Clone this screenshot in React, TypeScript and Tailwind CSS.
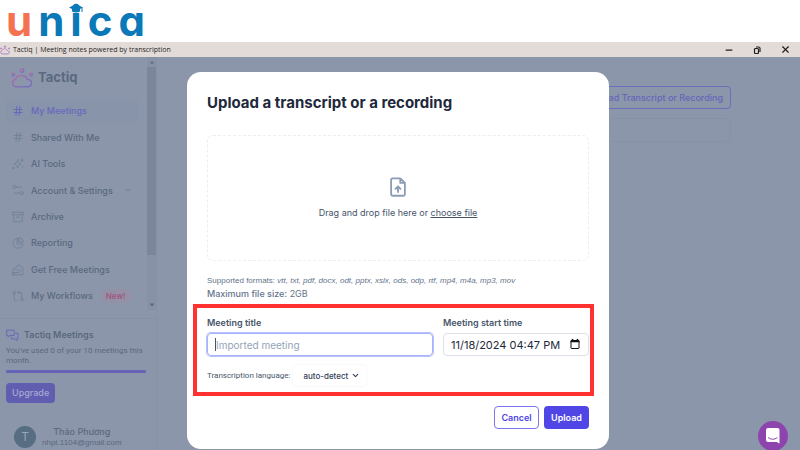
import type { ReactNode } from 'react';
import { ChevronDown, Hash, Minus, X } from 'lucide-react';

function Icon({ children, className = 'size-3' }: { children: ReactNode; className?: string }) {
  return (
    <svg
      viewBox="0 0 24 24"
      fill="none"
      stroke="currentColor"
      strokeWidth={1.7}
      strokeLinecap="round"
      strokeLinejoin="round"
      className={`shrink-0 ${className}`}
      aria-hidden="true"
    >
      {children}
    </svg>
  );
}

const sparkles = (
  <Icon>
    <path d="M11 4c1 5 2.500 7 7 8-4.500 1-6 3-7 8-1-5-2.500-7-7-8 4.500-1 6-3 7-8z" />
    <path d="M20 2v5M17.500 4.500h5M3 18v4M1 20h4M21 17v2" />
  </Icon>
);

const sliders = (
  <Icon>
    <circle cx="5" cy="6" r="3.200" />
    <circle cx="19" cy="18" r="3.200" />
    <path d="M9 6h11M4 18h11" />
  </Icon>
);

const archive = (
  <Icon>
    <path d="M1.500 2.500h21v5h-21zM3.500 7.500v14h17v-14M9 12.500h6" />
  </Icon>
);

const pie = (
  <Icon>
    <path d="M14.500 1.500a9 9 0 0 1 8 8.500h-8z" />
    <path d="M10.500 2.500a10 10 0 1 0 11.500 11.500H10.500z" />
  </Icon>
);

const house = (
  <Icon>
    <path d="M2 11 13 2.500c5 0 9 3.500 9 8.500v10.500H2z" />
    <path d="M2 17h12l4-5M7 12h7M2 21.500l4-4.500" />
  </Icon>
);

const workflow = (
  <Icon>
    <circle cx="4.500" cy="5" r="2.800" />
    <circle cx="19.500" cy="19" r="2.800" />
    <path d="M4.500 8v10.500a3 3 0 0 0 3 3H10M12 5h4.500a3 3 0 0 1 3 3v8M14.500 2l-3 3 3 3" />
  </Icon>
);

const nav = [
  { label: 'My Meetings', icon: <Hash className="size-3 shrink-0" />, active: true },
  { label: 'Shared With Me', icon: <Hash className="size-3 shrink-0" strokeWidth={1.7} /> },
  { label: 'AI Tools', icon: sparkles },
  { label: 'Account & Settings', icon: sliders, expandable: true },
  { label: 'Archive', icon: archive },
  { label: 'Reporting', icon: pie },
  { label: 'Get Free Meetings', icon: house },
  { label: 'My Workflows', icon: workflow, badge: 'New!' },
];

function CloudMark({ id, className }: { id: string; className: string }) {
  return (
    <svg viewBox="0 0 22 20" fill="none" className={`shrink-0 ${className}`} aria-hidden="true">
      <defs>
        <linearGradient id={id} x1="0" y1="0" x2="1" y2="1">
          <stop offset="0" stopColor="#c0609f" />
          <stop offset="1" stopColor="#6a5fd0" />
        </linearGradient>
      </defs>
      <g stroke={`url(#${id})`} strokeWidth="1.500">
        <path d="M4.800 18.700a3.800 3.800 0 0 1-.5-7.400C5.500 8.500 8 7.500 10.500 7.500c3 0 4.800 1.500 5.600 3.700 2.600.2 4.400 1.600 4.400 3.800 0 2.300-1.800 3.700-4.200 3.700z" />
        <circle cx="11" cy="2.500" r="1.700" />
        <circle cx="2.200" cy="6.500" r="1.300" />
        <circle cx="20" cy="6.500" r="1.300" />
      </g>
    </svg>
  );
}

function Brand() {
  return (
    <header className="shrink-0 bg-white pl-[6px] font-['Inter',sans-serif]">
      <div className="flex gap-[6px] text-[42px] font-bold leading-[42px] text-[#0b78b8] [font-feature-settings:'cv11']">
        <span className="text-[#f57251]">u</span>
        <span>n</span>
        <span className="relative">
          i
          <svg viewBox="0 0 14 9" className="absolute -left-px top-1 h-[9px] w-[14px]" aria-hidden="true">
            <path d="M0 3.500 7 0l7 3.500L7 7z" fill="#0b78b8" />
            <path d="M3 4.500v3q4 2 8 0v-3L7 6.500z" fill="#0b78b8" />
            <path d="M13 3.500V8" stroke="#0b78b8" strokeWidth="1" />
          </svg>
        </span>
        <span>c</span>
        <span>a</span>
      </div>
    </header>
  );
}

function TitleBar() {
  return (
    <div className="flex h-[15px] shrink-0 items-center bg-[#e3dbd8] text-[#1f1f1f]">
      <CloudMark id="mark-title" className="size-[10px]" />
      <span className="ml-[3px] flex-1 font-['Open_Sans',sans-serif] text-[7px] leading-[12px]">
        Tactiq | Meeting notes powered by transcription
      </span>
      <div className="flex items-center gap-[19px] pr-[9px]">
        <button type="button" aria-label="Minimize">
          <Minus className="size-[10px]" strokeWidth={3} />
        </button>
        <button type="button" aria-label="Restore">
          <svg viewBox="0 0 8 8" fill="none" stroke="currentColor" className="size-2" aria-hidden="true">
            <rect x="1.500" y="2.500" width="4" height="5" rx="1" strokeWidth="1.200" />
            <path d="M3 1h2.500a1.500 1.500 0 0 1 1.500 1.500V6" strokeWidth="1.200" />
          </svg>
        </button>
        <button type="button" aria-label="Close">
          <X className="size-[11px]" strokeWidth={2.5} />
        </button>
      </div>
    </div>
  );
}

function Sidebar() {
  return (
    <aside className="flex w-[157px] shrink-0 flex-col border-r border-[#8691a5] text-[#5a697f]">
      <div className="flex h-[253px]">
        <div className="flex flex-1 flex-col pb-0.5 pl-[6px] pr-2">
          <div className="flex h-[42px] shrink-0 items-center gap-[5px] pl-[5px]">
            <CloudMark id="mark-side" className="h-5 w-[22px] opacity-70" />
            <span className="text-[13px] font-bold">Tactiq</span>
          </div>
          <nav className="flex flex-1 flex-col justify-between">
            {nav.map((n) => (
              <a
                key={n.label}
                href="#"
                className={`flex h-6 items-center gap-[7px] rounded pl-[6px] text-[9px] font-medium ${
                  n.active ? 'bg-[#8794aa] text-[#6a67bd]' : ''
                }`}
              >
                <span className={n.active ? '' : 'text-[#6f7f95]'}>{n.icon}</span>
                {n.label}
                {n.expandable && <ChevronDown className="ml-1 size-2" />}
                {n.badge && (
                  <span className="rounded-full bg-[#9491a7] px-[6px] text-[8px] leading-[14px] text-[#a2527f]">
                    {n.badge}
                  </span>
                )}
              </a>
            ))}
          </nav>
        </div>
        <div className="flex w-[9px] flex-col items-center justify-between bg-[#8792a5] text-[#5d6879]">
          <svg viewBox="0 0 10 10" className="size-[10px]" aria-hidden="true">
            <path d="M3 6.500 5 4l2 2.500z" fill="currentColor" />
          </svg>
          <div className="mb-auto h-[188px] w-full bg-[#7b8698]" />
          <svg viewBox="0 0 10 10" className="size-[10px]" aria-hidden="true">
            <path d="M2.500 3.500h5L5 6.500z" fill="currentColor" />
          </svg>
        </div>
      </div>

      <div className="mt-2 flex flex-1 flex-col border-t border-[#8691a5] px-[6px] pt-[9px]">
        <div className="flex items-center gap-[5px] text-[9px] font-semibold leading-[14px]">
          <Icon className="size-[13px] text-[#6865ba]">
            <path d="M2 2h13v10H7l-3 3v-3H2zM18 8h4v10h-2v4l-4-4h-6v-3" />
          </Icon>
          Tactiq Meetings
        </div>
        <p className="mt-1 font-['Roboto',sans-serif] text-[8px] leading-[10px]">
          You've used 0 of your 10 meetings this month.
        </p>
        <div className="mt-1 h-[3px] w-[140px] rounded-full bg-[#6662b5]" />
        <button
          type="button"
          className="mt-[10px] h-5 self-start rounded bg-[#615db1] px-[6px] text-[9px] font-medium text-[#a5a9d2]"
        >
          Upgrade
        </button>
        <div className="mt-[23px] flex items-center gap-[6px] pl-2">
          <span className="flex size-[22px] items-center justify-center rounded-full bg-[#576d82] text-[12px] text-[#98a6b6]">
            T
          </span>
          <div className="text-center">
            <div className="text-[9px] font-medium leading-[12px]">Thảo Phương</div>
            <div className="font-['Liberation_Sans',sans-serif] text-[8px] leading-[10px]">nhpt.1104@gmail.com</div>
          </div>
        </div>
      </div>
    </aside>
  );
}

function UploadDialog() {
  return (
    <div
      role="dialog"
      aria-labelledby="dialog-title"
      className="w-[422px] rounded-[14px] bg-white p-5 text-[#475569]"
    >
      <h1 id="dialog-title" className="text-[15px] font-bold leading-[22px] text-[#1e293b]">
        Upload a transcript or a recording
      </h1>

      <div className="mt-[21px] flex h-[126px] flex-col items-center justify-center rounded-md border border-dashed border-[#eceef2]">
        <Icon className="size-[22px] text-[#8b9db5]">
          <path
            d="M6 2.500h8.500l5 5V20a1.500 1.500 0 0 1-1.500 1.500H6A1.500 1.500 0 0 1 4.500 20V4A1.500 1.500 0 0 1 6 2.500zM14.500 2.500v5h5M12 17.500v-6M9.300 14l2.700-2.700 2.700 2.700"
            strokeWidth="2"
          />
        </Icon>
        <p className="mt-2 text-[9px] leading-[14px]">
          Drag and drop file here or{' '}
          <a href="#" className="underline">
            choose file
          </a>
        </p>
      </div>

      <p className="mt-[13px] font-['Liberation_Sans',sans-serif] text-[8px] leading-[14px] text-[#64748b]">
        Supported formats: <em>vtt, txt, pdf, docx, odt, pptx, xslx, ods, odp, rtf, mp4, m4a, mp3, mov</em>
      </p>
      <p className="text-[9px] leading-[12px] text-[#64748b]">
        <span className="font-medium">Maximum file size:</span> 2GB
      </p>

      <form>
        <div className="-ml-[14px] -mr-[5px] mt-1 border-4 border-[#ff3131] pb-[6px] pl-[10px] pr-px pt-[9px]">
          <div className="flex gap-[10px]">
            <div className="flex-1">
              <label htmlFor="title" className="block text-[9px] font-semibold leading-[12px]">
                Meeting title
              </label>
              <div className="relative mt-1">
                <input
                  id="title"
                  type="text"
                  placeholder="Imported meeting"
                  className="block h-[23px] w-full rounded border border-[#a5b4fc] px-2 text-[10px] outline-none ring-1 ring-[#b9bffb] placeholder:text-[#94a3b8]"
                />
                <span className="absolute left-2 top-[5px] h-[13px] w-px bg-[#475569]" />
              </div>
            </div>
            <div className="w-[146px]">
              <label htmlFor="start" className="block text-[9px] font-semibold leading-[12px]">
                Meeting start time
              </label>
              <div className="relative mt-1">
                <input
                  id="start"
                  type="text"
                  defaultValue="11/18/2024 04:47 PM"
                  className="block h-[23px] w-full rounded border border-[#dde2ea] pl-[7px] pr-5 text-[11px] text-[#1e293b]"
                />
                <button type="button" aria-label="Pick a date" className="absolute right-[9px] top-[6px]">
                  <svg viewBox="0 0 10 10" className="size-[10px] text-[#111]" aria-hidden="true">
                    <path d="M2.500 0v2M7.500 0v2M.5 2.500h9" stroke="currentColor" strokeWidth="1.600" />
                    <rect x="1" y="1.500" width="8" height="8" rx=".5" fill="none" stroke="currentColor" />
                  </svg>
                </button>
              </div>
            </div>
          </div>
          <div className="mt-[9px] flex items-center gap-[3px]">
            <label htmlFor="language" className="font-['Roboto',sans-serif] text-[8px]">
              Transcription language:
            </label>
            <div className="relative">
              <select
                id="language"
                className="block h-[21px] w-[73px] appearance-none rounded bg-white pl-[10px] text-[8px] font-medium text-[#334155] shadow-[0_0_2px_#e8ebf1]"
              >
                <option>auto-detect</option>
              </select>
              <ChevronDown
                className="pointer-events-none absolute right-[6px] top-[6px] size-[9px] text-[#334155]"
                strokeWidth={3}
              />
            </div>
          </div>
        </div>

        <div className="mt-[10px] flex justify-end gap-[5px] text-[9px] font-semibold">
          <button type="button" className="h-[23px] w-[45px] rounded border border-[#7b75ec] text-[#4f46e5]">
            Cancel
          </button>
          <button type="button" className="h-[23px] w-[45px] rounded bg-[#4f46e5] text-white">
            Upload
          </button>
        </div>
      </form>
    </div>
  );
}

export default function App() {
  return (
    <div className="flex min-h-screen flex-col bg-[#8b96aa] font-['Inter',sans-serif]">
      <Brand />
      <TitleBar />
      <div className="relative flex flex-1 overflow-hidden">
        <Sidebar />
        <main className="flex flex-1 flex-col pl-[30px] pr-[69px] pt-[29px]">
          <button
            type="button"
            className="h-[23px] self-end rounded border border-[#6d6dbb] px-[7px] text-[9px] font-medium text-[#6665bb]"
          >
            Upload Transcript or Recording
          </button>
          <div className="mt-[9px] h-6 rounded border border-[#8592a7]" />
        </main>

        <div className="absolute inset-0 flex items-start justify-center pr-1 pt-[15px]">
          <UploadDialog />
        </div>
        <button
          type="button"
          aria-label="Open chat"
          className="absolute -bottom-px right-3 flex size-[30px] items-center justify-center rounded-full bg-[#8e44ad]"
        >
          <svg viewBox="0 0 14 16" className="h-4 w-[14px]" aria-hidden="true">
            <path d="M2 0h9.500a2 2 0 0 1 2 2v13.500L10.500 14H2a2 2 0 0 1-2-2V2a2 2 0 0 1 2-2z" fill="#fff" />
            <path d="M2.500 9.800q4.300 3.200 8.500 0" fill="none" stroke="#8e44ad" strokeWidth="1" strokeLinecap="round" />
          </svg>
        </button>
      </div>
    </div>
  );
}
